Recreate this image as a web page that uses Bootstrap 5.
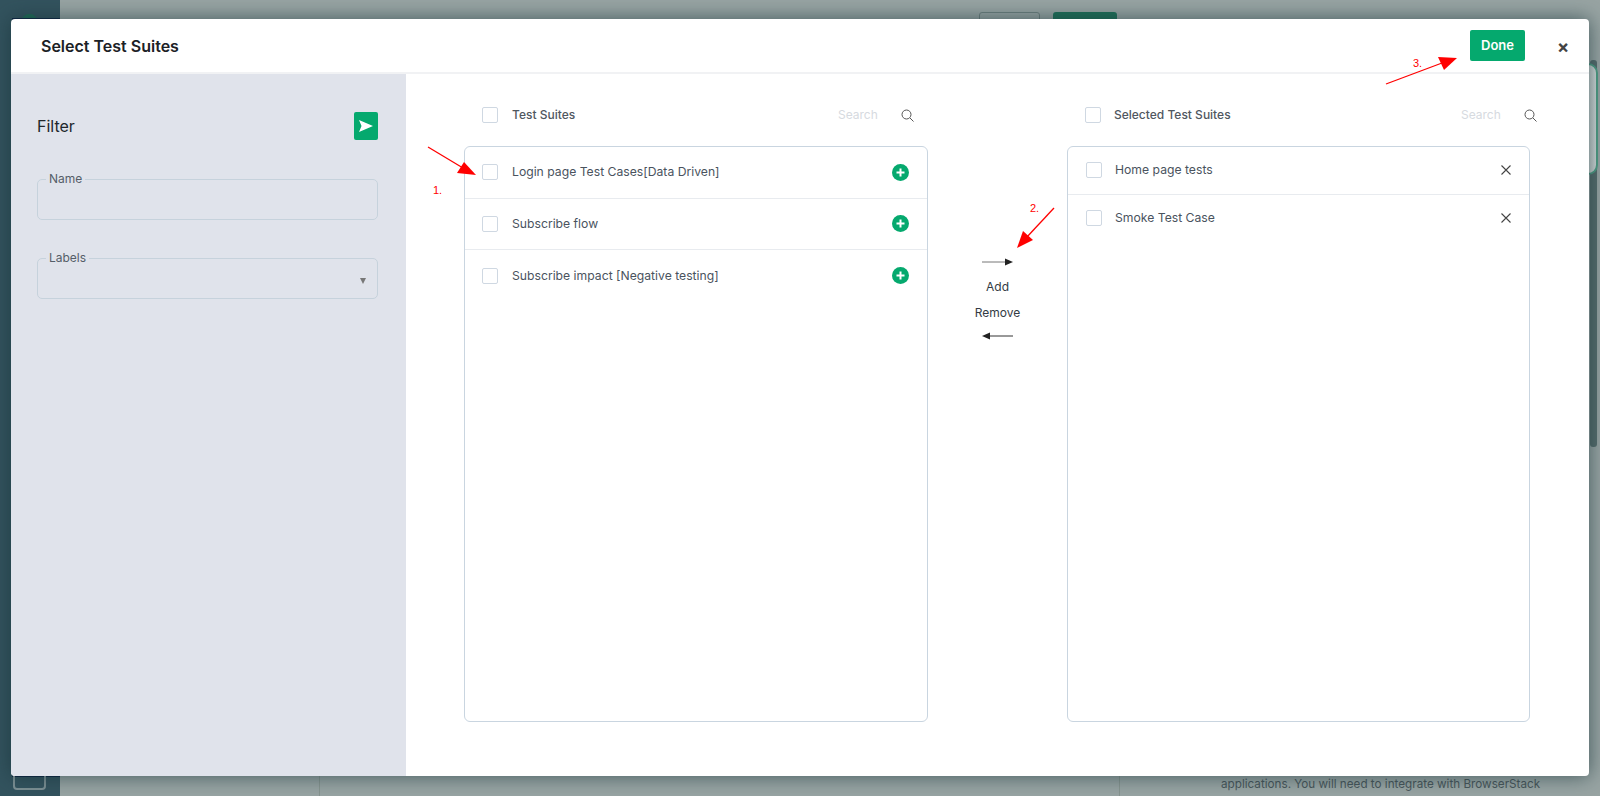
<!DOCTYPE html>
<html lang="en">
<head>
<meta charset="utf-8">
<title>Select Test Suites</title>
<link href="https://cdn.jsdelivr.net/npm/bootstrap@5.3.0/dist/css/bootstrap.min.css" rel="stylesheet">
<style>
html,body{height:100%;overflow:hidden}
body{font-family:Inter,"Liberation Sans",sans-serif;background:#98a4a3;color:#444e58;position:relative}
.bg-rail{width:60px;background:#33535e;flex:none;position:relative}
.bg-rail-blob{position:absolute;left:21px;top:14px;width:17px;height:17px;border-radius:50%;background:#1f6a55}
.bg-rail-line{position:absolute;left:12px;right:0;top:18px;height:2px;background:#0d2340}
.bg-rail-line-b{top:775px}
.bg-rail-box{position:absolute;left:13px;top:760px;width:33px;height:30px;border:2px solid #7d9094;border-radius:4px}
.bg-side{width:260px;flex:none;position:relative}
.bg-mid{width:800px;flex:none;position:relative}
.bg-side::after,.bg-mid::after{content:"";position:absolute;right:0;top:776px;bottom:0;width:1px;background:#87948f}
.bg-btn-a{position:absolute;left:659px;top:12px;width:61px;height:30px;border:1px solid #6d7f7e;border-radius:3px}
.bg-btn-b{position:absolute;left:733px;top:12px;width:64px;height:30px;background:#1f6f58;border-radius:3px}
.bg-end{flex:1;position:relative}
.bg-text{position:absolute;left:101px;top:776px;font-size:11.7px;white-space:nowrap;color:#48565a}
.bg-bar{position:absolute;right:3px;top:60px;width:7px;height:387px;background:#566c6c;border-radius:3px}
.bg-card{position:absolute;right:2px;top:63px;width:24px;height:112px;border:2px solid #4f9d84;border-radius:10px;background:linear-gradient(90deg,#b0bebc,#d4dbda)}
.dlg{position:absolute;left:11px;top:19px;width:1578px;height:757px;background:#fff;border-radius:4px;box-shadow:0 0 20px rgba(22,50,56,.68);overflow:hidden}
.dlg-head{height:55px;padding:3px 16px 0 30px;border-bottom:2px solid #f1f2f4;flex:none}
.dlg-title{font-size:16px;font-weight:600;color:#1c2126;margin:0}
.btn-done{background:#05a96e;border:0;border-radius:2px;color:#fff;font-size:13px;font-weight:600;width:55px;height:31px;padding:0;margin:-3px 28px 0 0}
.btn-shut{font-size:18px;font-weight:700;line-height:1;color:#444;width:20px;text-align:center}
.dlg-side{width:395px;flex:none;background:#e0e3eb;padding:38px 28px 0 26px}
.side-top{margin-bottom:39px}
.side-title{font-size:16px;color:#22272c;margin:0}
.btn-send{background:#05a96e;width:24px;height:28px;border-radius:2px;border:0;padding:0}
.fld{height:41px;border:1px solid #c6d2dc;border-radius:5px;position:relative;margin-bottom:38px}
.fld-cap{position:absolute;left:8px;top:-9px;padding:0 3px;background:#e0e3eb;font-size:12px;line-height:16px;color:#555e68}
.fld-car{position:absolute;right:11px;top:19px;width:0;height:0;border-left:3.5px solid transparent;border-right:3.5px solid transparent;border-top:6px solid #777}
.dlg-main{padding:26px 59px 55px 58px;min-width:0}
.pane{width:464px;flex:none}
.pane-b{width:463px}
.pane-head{height:30px;margin-bottom:16px;padding-left:18px;padding-right:14px}
.pane-head-b{padding-right:0;margin-right:-7px;padding-left:18px}
.head-lbl{font-size:12px;font-weight:500;color:#50575f;margin-left:14px}
.pane-head-b .head-lbl{margin-left:13px}
.head-find{font-size:12px;color:#d6dae0;width:40px;margin-right:23px}
.tick.form-check-input{width:16px;height:16px;margin:0;border:1px solid #cfd8e2;border-radius:2px;flex:none;float:none}
.lst{height:576px;border:1px solid #c9d5e0;border-radius:6px;background:#fff;overflow:hidden}
.lst-row{padding:0 18px 0 17px;border-bottom:1px solid #e8ebef;font-size:12.2px;color:#4a535e;height:51.5px}
.lst-row-b{height:47.5px;padding:0 18px}
.lst-row-c{border-bottom:0}
.lst-lbl{margin-left:14px}
.lst-row-b .lst-lbl{margin-left:13px}
.mid-col{width:139px;flex:none;padding-top:158px;font-size:12px;color:#333b44;line-height:16px}
.mid-add{margin:13px 0 10px}
.mid-rem{margin:0 0 11px}
.notes{position:absolute;left:0;top:0;width:1600px;height:796px;pointer-events:none}
.notes text{font-family:"Liberation Sans",sans-serif;font-size:11px;fill:#f00}
</style>
</head>
<body>
<div class="d-flex h-100">
  <div class="bg-rail"><div class="bg-rail-blob"></div><div class="bg-rail-line"></div><div class="bg-rail-line bg-rail-line-b"></div><div class="bg-rail-box"></div></div>
  <div class="bg-side"></div>
  <div class="bg-mid"><div class="bg-btn-a"></div><div class="bg-btn-b"></div></div>
  <div class="bg-end"><div class="bg-text">applications. You will need to integrate with BrowserStack</div><div class="bg-bar"></div><div class="bg-card"></div></div>
</div>

<div class="dlg d-flex flex-column">
  <div class="dlg-head d-flex align-items-center">
    <h5 class="dlg-title me-auto">Select Test Suites</h5>
    <button class="btn btn-done" type="button">Done</button>
    <span class="btn-shut">×</span>
  </div>
  <div class="d-flex flex-grow-1">
    <div class="dlg-side">
      <div class="side-top d-flex justify-content-between align-items-center">
        <p class="side-title">Filter</p>
        <button class="btn-send d-flex align-items-center justify-content-center" type="button" aria-label="Apply filter">
          <svg width="14" height="12" viewBox="0 0 14 12"><path d="M0 0L14 6L0 12L2.5 6Z" fill="#fff"/></svg>
        </button>
      </div>
      <div class="fld"><span class="fld-cap">Name</span></div>
      <div class="fld"><span class="fld-cap">Labels</span><span class="fld-car"></span></div>
    </div>
    <div class="dlg-main d-flex flex-grow-1">
      <div class="pane">
        <div class="pane-head d-flex align-items-center">
          <input class="form-check-input tick" type="checkbox" aria-label="All test suites">
          <span class="head-lbl me-auto">Test Suites</span>
          <span class="head-find">Search</span>
          <svg width="13" height="13" viewBox="0 0 13 13" fill="none" stroke="#555" stroke-width="1"><circle cx="5.5" cy="5.5" r="4.5"/><path d="M9 9L12.5 12.5"/></svg>
        </div>
        <div class="lst">
          <div class="lst-row d-flex align-items-center"><input class="form-check-input tick" type="checkbox" aria-label="Select"><span class="lst-lbl me-auto">Login page Test Cases[Data Driven]</span><svg width="17" height="17" viewBox="0 0 17 17"><circle cx="8.5" cy="8.5" r="8.5" fill="#05a96e"/><path d="M8.5 4.5V12.5M4.5 8.5H12.5" stroke="#fff" stroke-width="2"/></svg></div>
          <div class="lst-row d-flex align-items-center"><input class="form-check-input tick" type="checkbox" aria-label="Select"><span class="lst-lbl me-auto">Subscribe flow</span><svg width="17" height="17" viewBox="0 0 17 17"><circle cx="8.5" cy="8.5" r="8.5" fill="#05a96e"/><path d="M8.5 4.5V12.5M4.5 8.5H12.5" stroke="#fff" stroke-width="2"/></svg></div>
          <div class="lst-row lst-row-c d-flex align-items-center"><input class="form-check-input tick" type="checkbox" aria-label="Select"><span class="lst-lbl me-auto">Subscribe impact [Negative testing]</span><svg width="17" height="17" viewBox="0 0 17 17"><circle cx="8.5" cy="8.5" r="8.5" fill="#05a96e"/><path d="M8.5 4.5V12.5M4.5 8.5H12.5" stroke="#fff" stroke-width="2"/></svg></div>
        </div>
      </div>
      <div class="mid-col d-flex flex-column align-items-center text-center">
        <svg width="31" height="8" viewBox="0 0 31 8"><path d="M0 4H25" stroke="#777" stroke-width="1"/><path d="M23 0.5L31 4L23 7.5Z" fill="#222"/></svg>
        <div class="mid-add">Add</div>
        <div class="mid-rem">Remove</div>
        <svg width="31" height="8" viewBox="0 0 31 8"><path d="M6 4H31" stroke="#333" stroke-width="1"/><path d="M8 0.5L0 4L8 7.5Z" fill="#222"/></svg>
      </div>
      <div class="pane pane-b">
        <div class="pane-head pane-head-b d-flex align-items-center">
          <input class="form-check-input tick" type="checkbox" aria-label="All selected test suites">
          <span class="head-lbl me-auto">Selected Test Suites</span>
          <span class="head-find">Search</span>
          <svg width="13" height="13" viewBox="0 0 13 13" fill="none" stroke="#555" stroke-width="1"><circle cx="5.5" cy="5.5" r="4.5"/><path d="M9 9L12.5 12.5"/></svg>
        </div>
        <div class="lst">
          <div class="lst-row lst-row-b d-flex align-items-center"><input class="form-check-input tick" type="checkbox" aria-label="Select"><span class="lst-lbl me-auto">Home page tests</span><svg width="10" height="10" viewBox="0 0 10 10" fill="none" stroke="#444" stroke-width="1.1"><path d="M.5.5L9.5 9.5M9.5.5L.5 9.5"/></svg></div>
          <div class="lst-row lst-row-b lst-row-c d-flex align-items-center"><input class="form-check-input tick" type="checkbox" aria-label="Select"><span class="lst-lbl me-auto">Smoke Test Case</span><svg width="10" height="10" viewBox="0 0 10 10" fill="none" stroke="#444" stroke-width="1.1"><path d="M.5.5L9.5 9.5M9.5.5L.5 9.5"/></svg></div>
        </div>
      </div>
    </div>
  </div>
</div>

<svg class="notes" viewBox="0 0 1600 796">
  <path d="M428 147L463 168" stroke="#f00" stroke-width="1.3"/><path d="M476 175L457 173L464 162Z" fill="#f00"/>
  <text x="433" y="194">1.</text>
  <path d="M1054 208L1026 238" stroke="#f00" stroke-width="1.3"/><path d="M1017 248L1023 231L1033 240Z" fill="#f00"/>
  <text x="1030" y="212">2.</text>
  <path d="M1386 84L1442 63" stroke="#f00" stroke-width="1.3"/><path d="M1457 58L1444 70L1438 57Z" fill="#f00"/>
  <text x="1413" y="67">3.</text>
</svg>
<script src="https://cdn.jsdelivr.net/npm/bootstrap@5.3.0/dist/js/bootstrap.bundle.min.js"></script>
</body>
</html>
